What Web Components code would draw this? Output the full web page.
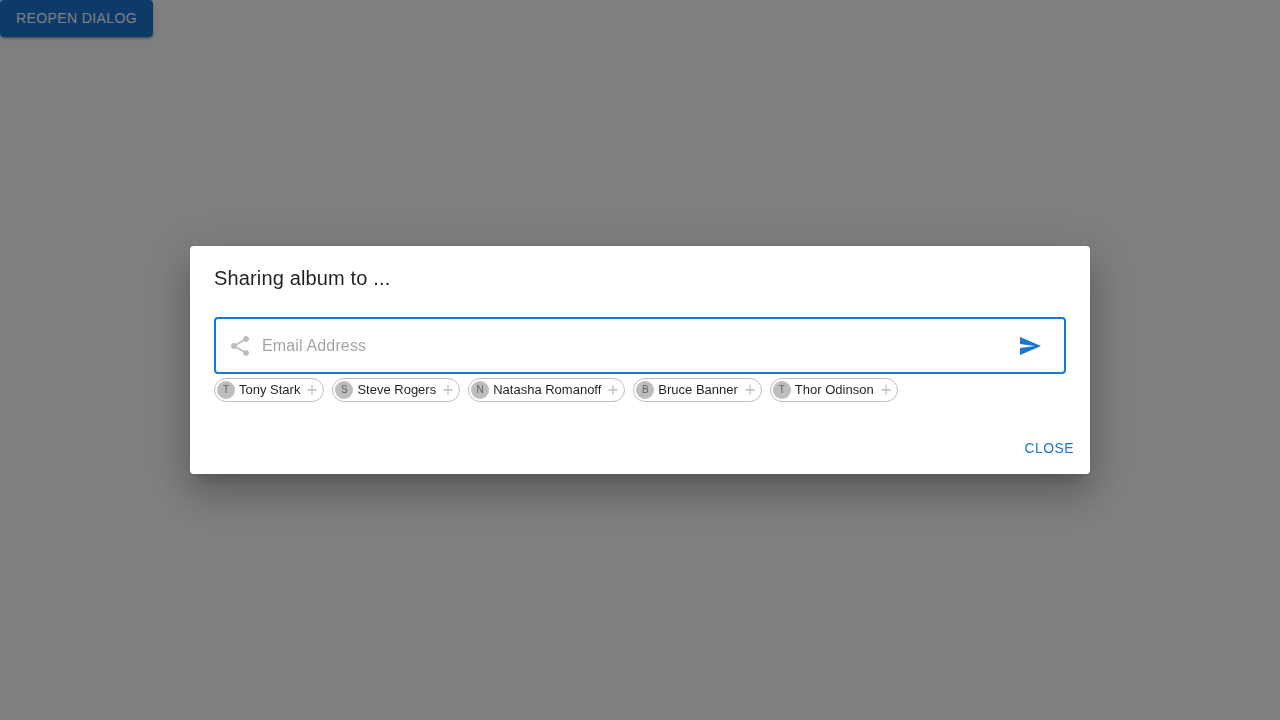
<!DOCTYPE html>
<html lang="en">
<head>
<meta charset="utf-8">
<title>Share album</title>
<style>
html, body { margin: 0; height: 100%; overflow: hidden; }
body { background: #fff; color: rgba(0,0,0,.87); font: 400 16px/1.5 "Liberation Sans", Arial, sans-serif; }
</style>
</head>
<body>
<share-app></share-app>
<script>
const define = (name, html) => {
  const template = document.createElement('template');
  template.innerHTML = html;
  customElements.define(name, class extends HTMLElement {
    constructor() {
      super();
      this.attachShadow({ mode: 'open' }).append(template.content.cloneNode(true));
    }
  });
};

define('text-button', `
<style>
:host { display: inline-flex; }
button { font: inherit; font-size: 14px; line-height: 24.5px; letter-spacing: .02857em; text-transform: uppercase; min-width: 64px; padding: 6px 8px; border: 0; border-radius: 4px; background: transparent; color: #1976d2; cursor: pointer; }
:host([contained]) button { padding: 6px 16px; background: #1976d2; color: #fff; box-shadow: 0 3px 1px -2px rgba(0,0,0,.2), 0 2px 2px 0 rgba(0,0,0,.14), 0 1px 5px 0 rgba(0,0,0,.12); }
</style>
<button type="button"><slot></slot></button>`);

define('contact-chip', `
<style>
:host { display: inline-flex; align-items: center; box-sizing: border-box; height: 24px; border: 1px solid #bdbdbd; border-radius: 16px; font-size: 13px; white-space: nowrap; cursor: pointer; }
.avatar { display: flex; align-items: center; justify-content: center; width: 18px; height: 18px; margin: 0 -4px 0 2px; border-radius: 50%; background: #bdbdbd; color: #616161; font-size: 10px; line-height: 1; }
.label { padding: 0 8px; }
svg { width: 16px; height: 16px; margin: 0 3px 0 -4px; fill: rgba(0,0,0,.26); }
</style>
<span class="avatar"><slot name="initial"></slot></span>
<span class="label"><slot></slot></span>
<svg viewBox="0 0 24 24"><path d="M19 13h-6v6h-2v-6H5v-2h6V5h2v6h6v2z"/></svg>`);

define('email-field', `
<style>
:host { display: flex; align-items: center; box-sizing: border-box; height: 57px; padding: 1px 14px 0 12px; border: 2px solid #1976d2; border-radius: 4px; }
svg { display: block; width: 24px; height: 24px; flex: none; fill: currentColor; }
.share { color: #bdbdbd; margin-right: 10px; }
input { flex: 1; min-width: 0; height: 23px; padding: 0; border: 0; outline: 0; background: none; font: inherit; letter-spacing: .00938em; color: rgba(0,0,0,.87); }
input::placeholder { color: currentColor; opacity: .42; }
button { flex: none; padding: 8px; border: 0; background: none; color: #1976d2; cursor: pointer; }
</style>
<svg class="share" viewBox="0 0 24 24"><path d="M18 16.08c-.76 0-1.44.3-1.96.77L8.91 12.7c.05-.23.09-.46.09-.7s-.04-.47-.09-.7l7.05-4.11c.54.5 1.25.81 2.04.81 1.66 0 3-1.34 3-3s-1.34-3-3-3-3 1.34-3 3c0 .24.04.47.09.7L8.04 9.81C7.5 9.31 6.79 9 6 9c-1.66 0-3 1.34-3 3s1.34 3 3 3c.79 0 1.5-.31 2.04-.81l7.12 4.16c-.05.21-.08.43-.08.65 0 1.61 1.31 2.92 2.92 2.92s2.92-1.31 2.92-2.92-1.31-2.92-2.92-2.92z"/></svg>
<input type="email" placeholder="Email Address">
<button type="button" aria-label="Send"><svg viewBox="0 0 24 24"><path d="M2.01 21 23 12 2.01 3 2 10l15 2-15 2z"/></svg></button>`);

define('modal-dialog', `
<style>
:host { position: fixed; inset: 0; display: flex; align-items: center; justify-content: center; background: rgba(0,0,0,.5); }
section { width: 900px; border-radius: 4px; background: #fff; box-shadow: 0 11px 15px -7px rgba(0,0,0,.2), 0 24px 38px 3px rgba(0,0,0,.14), 0 9px 46px 8px rgba(0,0,0,.12); }
h2 { margin: 0; padding: 16px 24px; font-weight: 400; font-size: 20px; line-height: 32px; letter-spacing: .0075em; }
.content { padding: 7px 24px 20px; }
footer { display: flex; justify-content: flex-end; padding: 8px; }
</style>
<section role="dialog">
<h2><slot name="title"></slot></h2>
<div class="content"><slot></slot></div>
<footer><slot name="actions"></slot></footer>
</section>`);

define('share-app', `
<style>
:host { display: block; }
.reopen { display: flex; }
.chips { display: flex; gap: 8px; margin-top: 4px; }
</style>
<div class="reopen"><text-button contained>Reopen dialog</text-button></div>
<modal-dialog>
<span slot="title">Sharing album to ...</span>
<email-field></email-field>
<div class="chips">
<contact-chip><span slot="initial">T</span>Tony Stark</contact-chip>
<contact-chip><span slot="initial">S</span>Steve Rogers</contact-chip>
<contact-chip><span slot="initial">N</span>Natasha Romanoff</contact-chip>
<contact-chip><span slot="initial">B</span>Bruce Banner</contact-chip>
<contact-chip><span slot="initial">T</span>Thor Odinson</contact-chip>
</div>
<text-button slot="actions">Close</text-button>
</modal-dialog>`);
</script>
</body>
</html>
